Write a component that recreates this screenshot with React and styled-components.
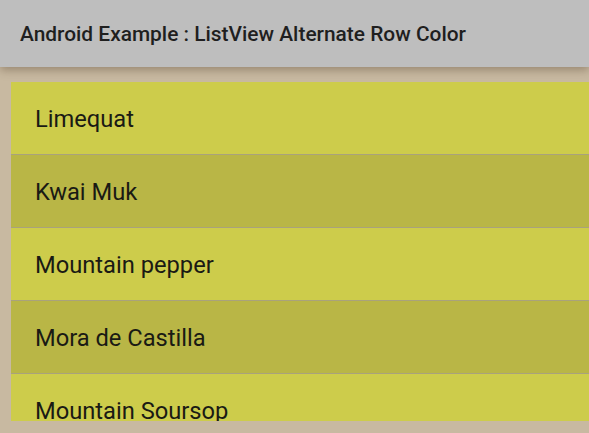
import React from "react";
import styled, { createGlobalStyle } from "styled-components";

const GlobalStyle = createGlobalStyle`
	html, body, #root {
		margin: 0;
		height: 100%;
	}
	body {
		font-family: Roboto, "Noto Sans", sans-serif;
		background: #c8b9a1;
		overflow: hidden;
	}
`;

const Screen = styled.div`
	display: flex;
	flex-direction: column;
	height: 433px;
	width: 589px;
	background: #c8b9a1;
`;

const Toolbar = styled.div`
	position: relative;
	z-index: 1;
	display: flex;
	align-items: center;
	height: 67px;
	padding: 0 20px;
	background: #bebebe;
	box-shadow: 0 3px 9px rgba(60, 40, 20, 0.35);
	flex-shrink: 0;
`;

const Title = styled.h1`
	margin: 0;
	font-size: 20.9px;
	font-weight: 500;
	color: #1f1f1f;
`;

const Content = styled.div`
	flex: 1;
	display: flex;
	padding: 15px 0 12px 11px;
	min-height: 0;
`;

const List = styled.ul`
	flex: 1;
	margin: 0;
	padding: 0;
	list-style: none;
	overflow: hidden;
`;

const Row = styled.li`
	display: flex;
	align-items: center;
	box-sizing: border-box;
	height: 73px;
	padding: 2px 0 0 24px;
	background: ${({ $alt }) => ($alt ? "#b9b646" : "#cdcc4b")};
	border-bottom: 1px solid #a9a27c;
	font-size: 23.7px;
	color: #1a1a14;
`;

const fruits = [
	"Limequat",
	"Kwai Muk",
	"Mountain pepper",
	"Mora de Castilla",
	"Mountain Soursop",
];

const App = () => {
	return (
		<Screen>
			<GlobalStyle />
			<Toolbar>
				<Title>Android Example : ListView Alternate Row Color</Title>
			</Toolbar>
			<Content>
				<List>
					{fruits.map((name, i) => (
						<Row key={name} $alt={i % 2 === 1}>
							{name}
						</Row>
					))}
				</List>
			</Content>
		</Screen>
	);
};

export default App;
